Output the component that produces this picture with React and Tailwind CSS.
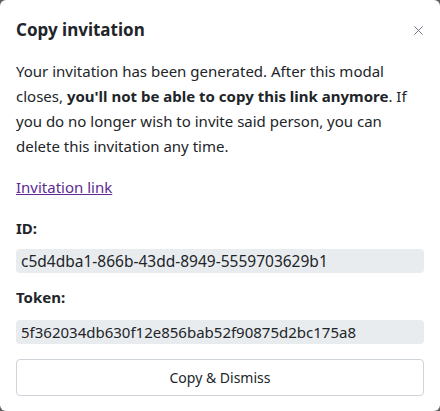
import React from "react";

function CloseIcon() {
  return (
    <svg width="11" height="11" viewBox="0 0 16 16" fill="none" stroke="#6b7280" strokeWidth="1.4">
      <path d="M2 2l12 12M14 2L2 14" />
    </svg>
  );
}

function App() {
  const font = { fontFamily: '"Noto Sans", "Open Sans", sans-serif' };
  return (
    <div className="bg-[#5f5f5f] h-[411px] w-[440px]" style={font}>
      <div className="bg-white rounded-md h-[411px] px-4 pt-[15px] text-[#212529]">
        <div className="flex items-center justify-between h-[30px]">
          <h5 className="text-[17px] font-bold leading-[30px]">Copy invitation</h5>
          <button className="w-3 h-6 flex items-center justify-center">
            <CloseIcon />
          </button>
        </div>
        <p className="mt-[14px] text-[15px] leading-[25px]">
          Your invitation has been generated. After this modal closes,{" "}
          <b>you'll not be able to copy this link anymore</b>. If you do no
          longer wish to invite said person, you can delete this invitation any
          time.
        </p>
        <a href="#" className="block w-fit mt-4 text-[15px] leading-[25px] text-[#5b2a94] underline">
          Invitation link
        </a>
        <div className="mt-4 text-[15px] font-bold leading-[25px]">ID:</div>
        <div className="mt-2 bg-[#e9ecef] rounded px-[5px] text-[15.5px] leading-6">
          c5d4dba1-866b-43dd-8949-5559703629b1
        </div>
        <div className="mt-3 text-[15px] font-bold leading-[25px]">Token:</div>
        <div className="mt-[10px] bg-[#e9ecef] rounded px-[5px] text-[15px] leading-6">
          5f362034db630f12e856bab52f90875d2bc175a8
        </div>
        <button className="mt-[15px] w-full h-[37px] border border-[#ced4da] rounded text-[14px]">
          Copy &amp; Dismiss
        </button>
      </div>
    </div>
  );
}

export default App;
